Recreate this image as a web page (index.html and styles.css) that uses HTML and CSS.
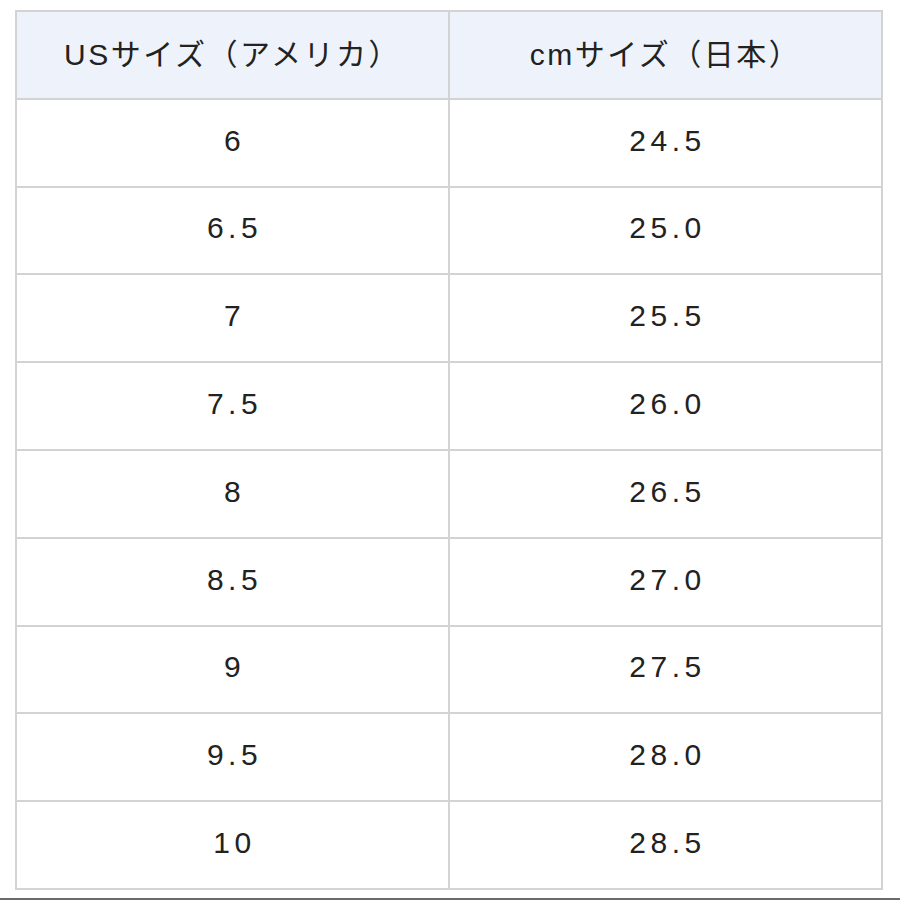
FILE: index.html
```html
<!DOCTYPE html>
<html lang="ja">
<head>
<meta charset="utf-8">
<link rel="stylesheet" href="styles.css">
</head>
<body>
<div class="page">
<table class="sizes">
<thead>
<tr><th>USサイズ（アメリカ）</th><th>cmサイズ（日本）</th></tr>
</thead>
<tbody>
<tr><td>6</td><td>24.5</td></tr>
<tr><td>6.5</td><td>25.0</td></tr>
<tr><td>7</td><td>25.5</td></tr>
<tr><td>7.5</td><td>26.0</td></tr>
<tr><td>8</td><td>26.5</td></tr>
<tr><td>8.5</td><td>27.0</td></tr>
<tr><td>9</td><td>27.5</td></tr>
<tr><td>9.5</td><td>28.0</td></tr>
<tr><td>10</td><td>28.5</td></tr>
</tbody>
</table>
</div>
<div class="bottom-line"></div>
</body>
</html>
```
FILE: styles.css
```css
html, body {
  margin: 0;
  padding: 0;
  background: #ffffff;
}
.page {
  padding: 10px 17px 0 15px;
  height: 888px;
  box-sizing: border-box;
}
.sizes {
  width: 868px;
  border-collapse: collapse;
  table-layout: fixed;
  font-family: "Liberation Sans", "Noto Sans CJK JP", sans-serif;
  color: #222222;
  font-size: 30px;
}
.sizes th, .sizes td {
  border: 2px solid #d3d3d3;
  text-align: center;
  vertical-align: middle;
  height: 81.8px;
  padding: 0 0 4px 4px;
  letter-spacing: 4.5px;
  font-weight: normal;
}
.sizes th {
  background: #eef3fb;
  font-size: 30px;
  letter-spacing: 2.5px;
  height: 79.8px;
  padding: 0 0 6px 0;
}
.bottom-line {
  margin-top: 10px;
  height: 2px;
  background: #6a6a6a;
}
```
